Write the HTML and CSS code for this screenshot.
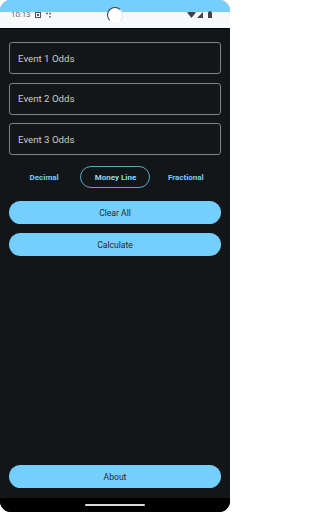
FILE: index.html
```html
<!DOCTYPE html>
<html>
<head>
<meta charset="utf-8">
<link rel="stylesheet" href="styles.css">
</head>
<body>
<div class="screen">
  <div class="statusbar">
    <div class="status-left">
      <span class="time">10:13</span>
      <svg class="sicon" width="6" height="6" viewBox="0 0 6 6"><rect x="0.5" y="0.5" width="5" height="5" fill="none" stroke="#555" stroke-width="1"/><rect x="2" y="2" width="2" height="2" fill="#555"/></svg>
      <svg class="sicon" width="6" height="6" viewBox="0 0 6 6"><circle cx="1" cy="1.5" r="0.9" fill="#555"/><circle cx="4" cy="1.5" r="0.9" fill="#555"/><circle cx="4" cy="4.8" r="0.9" fill="#555"/></svg>
    </div>
    <div class="status-right">
      <svg width="9" height="6" viewBox="0 0 9 6"><path d="M0 0.5 Q4.5 -1 9 0.5 L4.5 6 Z" fill="#444"/></svg>
      <svg width="6" height="6" viewBox="0 0 6 6"><path d="M6 0 L6 6 L0 6 Z" fill="#444"/></svg>
      <svg width="4" height="7" viewBox="0 0 4 7"><rect x="1.2" y="0" width="1.6" height="1" fill="#444"/><rect x="0" y="1" width="4" height="6" rx="0.5" fill="#444"/></svg>
    </div>
    <div class="camera"></div>
  </div>
  <div class="app">
    <div class="field">Event 1 Odds</div>
    <div class="field">Event 2 Odds</div>
    <div class="field">Event 3 Odds</div>
    <div class="toggle">
      <div class="seg">Decimal</div>
      <div class="seg active"><span class="pill">Money Line</span></div>
      <div class="seg">Fractional</div>
    </div>
    <button class="btn first">Clear All</button>
    <button class="btn">Calculate</button>
    <button class="btn about">About</button>
  </div>
  <div class="navbar"><div class="handle"></div></div>
</div>
</body>
</html>
```
FILE: styles.css
```css
html, body {
  margin: 0;
  padding: 0;
  background: #ffffff;
}
body {
  width: 230px;
  height: 512px;
  overflow: hidden;
  font-family: Roboto, "Noto Sans", sans-serif;
}
.screen {
  width: 230px;
  height: 512px;
  border-radius: 11px;
  overflow: hidden;
  display: flex;
  flex-direction: column;
  background: #000;
}
.statusbar {
  position: relative;
  height: 16px;
  border-top: 12px solid #75cffd;
  background: #f7f8f9;
  border-bottom: 1px solid #050607;
  display: flex;
  justify-content: space-between;
  align-items: flex-start;
  flex: none;
}
.status-left {
  display: flex;
  align-items: center;
  gap: 5px;
  padding-left: 11px;
  margin-top: -1px;
}
.time {
  font-size: 8px;
  color: #6a6a6a;
  line-height: 8px;
  letter-spacing: -0.1px;
}
.sicon { display: block; }
.status-right {
  display: flex;
  align-items: flex-end;
  gap: 1px;
  padding-right: 18px;
  margin-top: -1px;
}
.status-right svg:last-child { margin-left: 4px; }
.camera {
  position: absolute;
  left: 107px;
  top: -5px;
  width: 14px;
  height: 14px;
  border-radius: 50%;
  background: #ffffff;
  border: 1px solid #3a3f44;
  border-bottom-color: #fff;
  border-right-color: #dfe3e6;
}
.app {
  flex: 1;
  background: #131619;
  display: flex;
  flex-direction: column;
  padding: 13px 9px 10px 9px;
}
.field {
  height: 30px;
  flex: none;
  border: 1px solid #7f8388;
  border-radius: 3px;
  margin-bottom: 8.5px;
  padding-left: 8px;
  display: flex;
  align-items: center;
  font-size: 9.7px;
  color: #c9cbcd;
}
.toggle {
  display: flex;
  height: 22px;
  flex: none;
  margin-top: 2.5px;
}
.seg {
  flex: 1;
  display: flex;
  align-items: center;
  justify-content: center;
  font-size: 8px;
  font-weight: bold;
  color: #78cdf7;
}
.seg.active { padding-left: 1px; }
.pill {
  width: 70px;
  height: 22px;
  box-sizing: border-box;
  border: 1.2px solid #5ba7cc;
  border-radius: 11px;
  display: flex;
  align-items: center;
  justify-content: center;
  color: #95d5f3;
}
.btn {
  height: 23px;
  flex: none;
  border: none;
  border-radius: 12px;
  background: #75cffd;
  color: #1d2a33;
  font-family: Roboto, "Noto Sans", sans-serif;
  font-size: 8.6px;
  font-weight: normal;
  padding: 0;
  margin: 0 0 9px 0;
}
.btn.first { margin-top: 13px; }
.btn.about { margin-top: auto; margin-bottom: 0; }
.navbar {
  height: 14px;
  background: #000;
  flex: none;
  display: flex;
  justify-content: center;
  padding-top: 6px;
  box-sizing: border-box;
}
.handle {
  width: 60px;
  height: 2px;
  border-radius: 1px;
  background: #dadada;
}
```
